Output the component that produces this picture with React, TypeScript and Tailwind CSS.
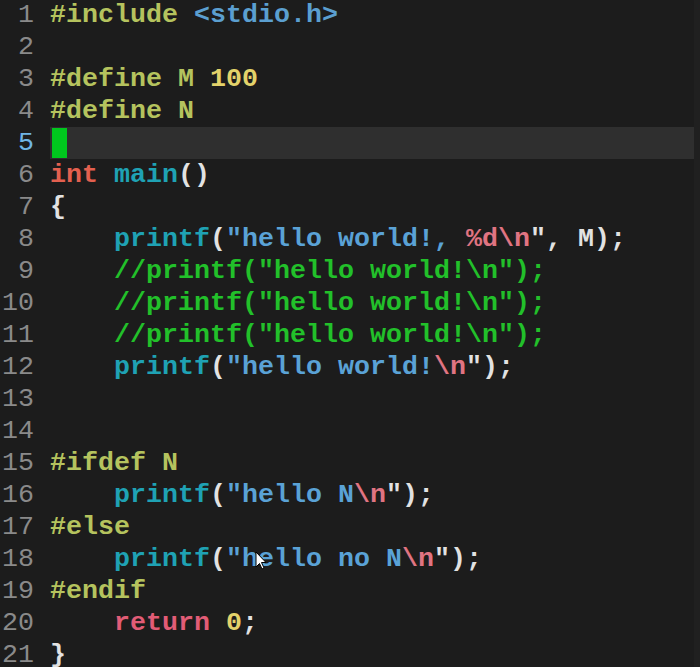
import React from "react";

type Tok = [string, string];

const PP = "text-[#b5c35e]";
const NUM = "text-[#e3d26a]";
const INC = "text-[#5b9fd0]";
const KW = "text-[#e3604f]";
const RET = "text-[#e25c76]";
const FN = "text-[#1fa2b4]";
const STR = "text-[#5aa2d6]";
const ESC = "text-[#e07482]";
const PUN = "text-[#e2e2e2]";
const CMT = "text-[#22c02a]";

const lines: Tok[][] = [
  [[PP, "#include "], [INC, "<stdio.h>"]],
  [],
  [[PP, "#define M "], [NUM, "100"]],
  [[PP, "#define N"]],
  [],
  [[KW, "int "], [FN, "main"], [PUN, "()"]],
  [[PUN, "{"]],
  [[PUN, "    "], [FN, "printf"], [PUN, "("], [STR, "\"hello world!, "], [ESC, "%d\\n"], [PUN, "\", M);"]],
  [[PUN, "    "], [CMT, "//printf(\"hello world!\\n\");"]],
  [[PUN, "    "], [CMT, "//printf(\"hello world!\\n\");"]],
  [[PUN, "    "], [CMT, "//printf(\"hello world!\\n\");"]],
  [[PUN, "    "], [FN, "printf"], [PUN, "("], [STR, "\"hello world!"], [ESC, "\\n"], [PUN, "\");"]],
  [],
  [],
  [[PP, "#ifdef N"]],
  [[PUN, "    "], [FN, "printf"], [PUN, "("], [STR, "\"hello N"], [ESC, "\\n"], [PUN, "\");"]],
  [[PP, "#else"]],
  [[PUN, "    "], [FN, "printf"], [PUN, "("], [STR, "\"hello no N"], [ESC, "\\n"], [PUN, "\");"]],
  [[PP, "#endif"]],
  [[PUN, "    "], [RET, "return "], [NUM, "0"], [PUN, ";"]],
  [[PUN, "}"]],
];

export default function App() {
  return (
    <div
      className="relative w-[700px] h-[667px] overflow-hidden bg-[#1c1c1c]"
      style={{ fontFamily: '"Liberation Mono", "DejaVu Sans Mono", monospace' }}
    >
      <div className="-mt-px flex flex-col">
        {lines.map((toks, i) => {
          const n = i + 1;
          const cur = n === 5;
          return (
            <div key={i} className="flex h-[32px] items-center text-[26.67px] leading-[32px]">
              <div
                className={
                  "w-[50px] shrink-0 pr-[16px] text-right " +
                  (cur ? "text-[#6fb4e4]" : "text-[#8a8a8a]")
                }
              >
                {n}
              </div>
              <div
                className={
                  "flex h-[32px] w-[644px] shrink-0 items-center whitespace-pre font-bold " +
                  (cur ? "bg-[#2f2f2f]" : "")
                }
              >
                {cur ? <span className="ml-[2px] inline-block h-[30px] w-[15px] bg-[#00c81e]" /> : null}
                {toks.map((t, j) => (
                  <span key={j} className={t[0]}>
                    {t[1]}
                  </span>
                ))}
              </div>
              <div className="w-[6px] self-stretch bg-[#202020]" />
            </div>
          );
        })}
      </div>
      <svg
        className="absolute left-[255px] top-[551px]"
        width="14"
        height="20"
        viewBox="0 0 14 20"
      >
        <path d="M1 1 L1 16 L4.5 12.5 L7 18 L9 17 L6.5 11.5 L11 11.5 Z" fill="#ffffff" stroke="#000000" strokeWidth="1" />
      </svg>
    </div>
  );
}
